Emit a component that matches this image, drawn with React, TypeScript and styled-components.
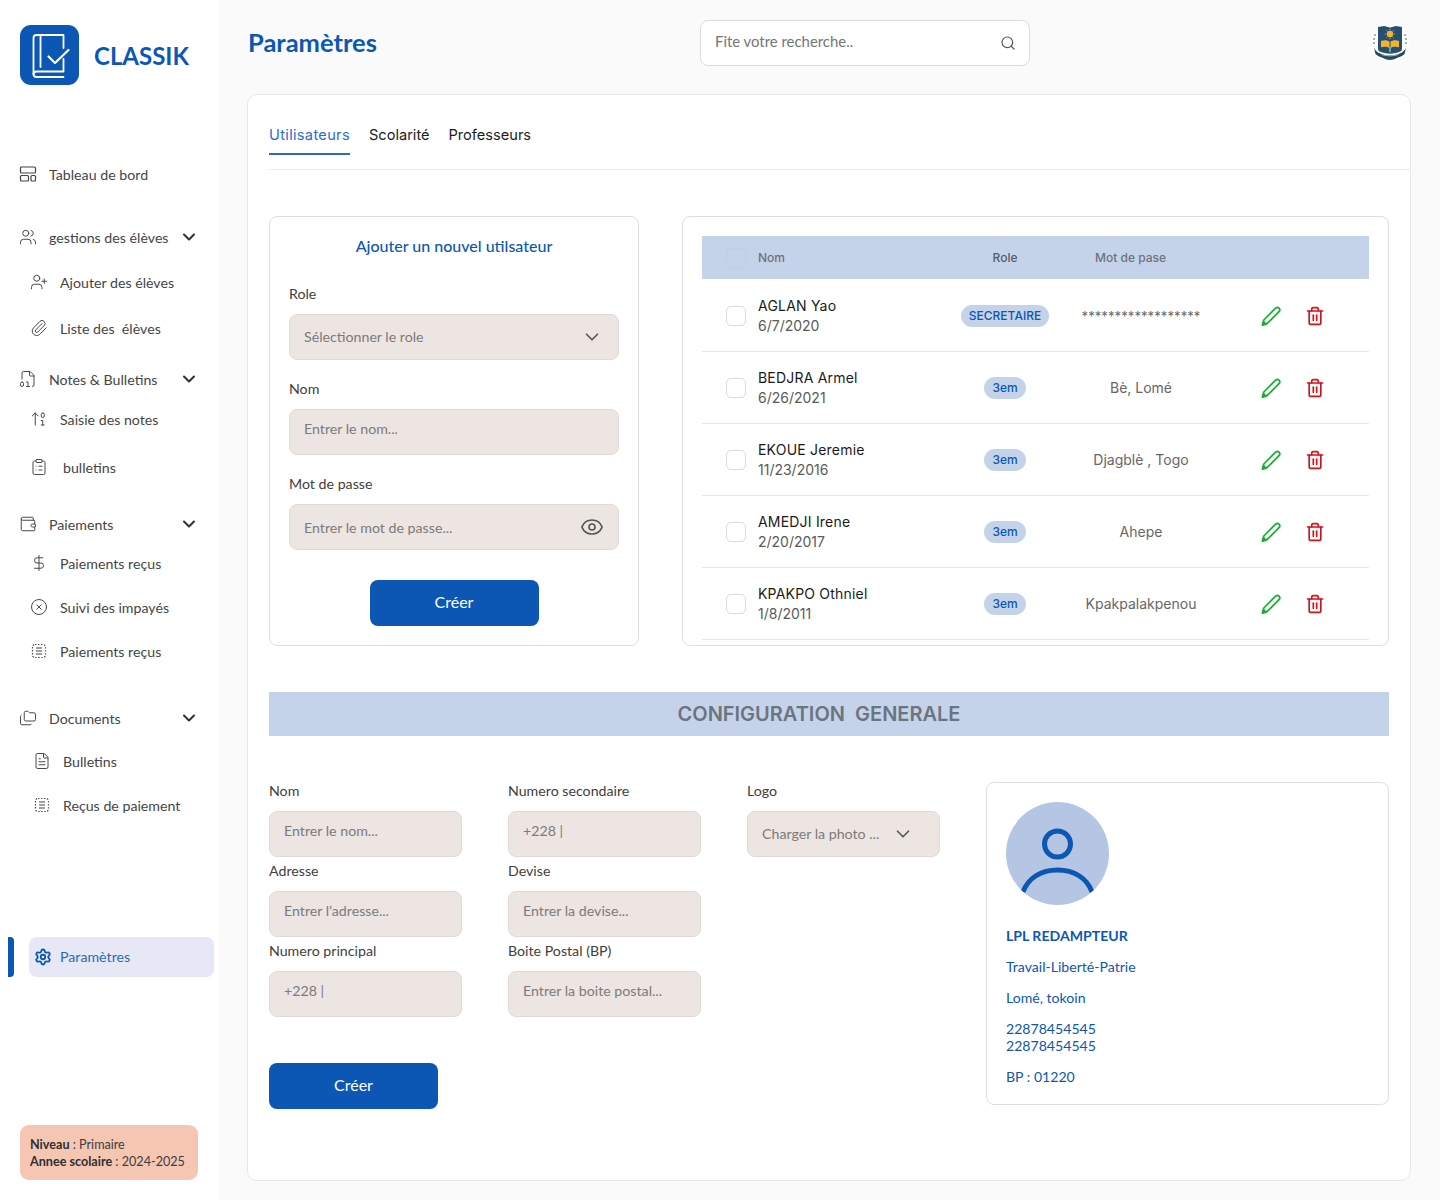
import React from 'react';
import styled, { createGlobalStyle } from 'styled-components';
import {
  Users, UserPlus, Paperclip, FileDigit, ArrowUp01, ClipboardList, Wallet, DollarSign,
  CircleX, Folders, FileText, Settings, ChevronDown, Search, Eye, Trash2,
} from 'lucide-react';

const Global = createGlobalStyle`
  html, body { margin: 0; padding: 0; background: #fafafa; }
  * { box-sizing: border-box; }
  body { font-family: "Lato", "Liberation Sans", sans-serif; color: #333; }
`;

const Page = styled.div`
  display: flex;
  width: 1440px;
  height: 1200px;
  overflow: hidden;
`;
const Sidebar = styled.aside`
  width: 218px;
  height: 1200px;
  background: #fff;
  display: flex;
  flex-direction: column;
  flex: none;
`;
const Brand = styled.div`
  display: flex;
  gap: 15px;
  padding: 25px 0 0 20px;
  height: 162px;
  align-items: flex-start;
`;
const BrandMark = styled.div`
  width: 59px;
  height: 60px;
  border-radius: 11px;
  background: #0b57b3;
  display: flex;
  align-items: center;
  justify-content: center;
`;
const BrandName = styled.div`
  font-size: 24px;
  font-weight: 700;
  color: #0b57b3;
  line-height: 62px;
`;
const NavRow = styled.div<{ $top: number; $sub?: boolean; $wide?: boolean; $textGap?: number }>`
  display: flex;
  align-items: center;
  height: 24px;
  margin-top: ${p => p.$top}px;
  padding-left: ${p => (p.$wide ? 33 : p.$sub ? 30 : 19)}px;
  padding-right: 19px;
  font-size: 14.2px;
  color: #454545;
  gap: ${p => p.$textGap ?? 12}px;
  white-space: pre;
  svg { flex: none; color: #444; }
`;
const NavIcon = styled.span`
  width: 18px;
  height: 18px;
  display: flex;
  align-items: center;
  justify-content: center;
  flex: none;
`;
const NavLabel = styled.span`
  flex: 1;
  margin-right: -6px;
`;
const ActiveRow = styled.div`
  display: flex;
  align-items: center;
  margin-top: 120px;
  height: 40px;
  gap: 15px;
  padding-left: 8px;
`;
const ActiveMark = styled.div`
  width: 6px;
  height: 40px;
  background: #0b57b3;
  border-radius: 0 4px 4px 0;
`;
const ActivePill = styled.div`
  width: 185px;
  height: 40px;
  background: #e6e8f5;
  border-radius: 8px;
  display: flex;
  align-items: center;
  gap: 8px;
  padding: 0 0 0 5px;
  font-size: 14.2px;
  color: #2f68b5;
  svg { color: #0b57b3; }
`;
const PillText = styled.span`
  padding-bottom: 2px;
`;
const LevelBox = styled.div`
  margin: 148px 0 0 20px;
  width: 178px;
  height: 55px;
  background: #f5c6b2;
  border-radius: 9px;
  padding: 12px 10px;
  font-size: 12.6px;
  line-height: 16.5px;
  color: #3d3d3d;
  white-space: nowrap;
  b { font-weight: 700; color: #2f2f2f; }
`;
const Main = styled.main`
  flex: 1;
  padding: 0 29px;
`;
const TopBar = styled.header`
  height: 94px;
  display: flex;
  align-items: flex-start;
`;
const Title = styled.h1`
  margin: 25px 0 0 1px;
  width: 452px;
  font-size: 25.5px;
  line-height: 34px;
  font-weight: 700;
  color: #0b57b3;
`;
const SearchBox = styled.div`
  margin-top: 20px;
  width: 330px;
  height: 46px;
  background: #fff;
  border: 1px solid #dcdcdc;
  border-radius: 8px;
  display: flex;
  align-items: center;
  justify-content: space-between;
  padding: 0 13px 0 14px;
  font-size: 14.9px;
  color: #757575;
  svg { color: #555; }
`;
const SearchText = styled.span`
  padding-bottom: 4px;
`;
const Emblem = styled.div`
  margin: 23px 0 0 340px;
  width: 40px;
  height: 40px;
`;
const Card = styled.section`
  width: 1164px;
  height: 1087px;
  background: #fff;
  border: 1px solid #e8e8e8;
  border-radius: 10px;
  padding: 0 0 0 21px;
`;
const Tabs = styled.nav`
  display: flex;
  gap: 19px;
  height: 75px;
  border-bottom: 1px solid #ececec;
  padding-top: 22px;
`;
const Tab = styled.div<{ $active?: boolean }>`
  height: 38px;
  line-height: 36px;
  font-family: "Inter", "Liberation Sans", sans-serif;
  font-size: 14.6px;
  letter-spacing: ${p => (p.$active ? '0.32px' : '0')};
  color: ${p => (p.$active ? '#2b6bd1' : '#1c1c1c')};
  border-bottom: 2px solid ${p => (p.$active ? '#2b6bd1' : 'transparent')};
`;
const Upper = styled.div`
  display: flex;
  gap: 43px;
  margin-top: 46px;
`;
const FormPanel = styled.div`
  width: 370px;
  height: 430px;
  border: 1px solid #dedede;
  border-radius: 8px;
  padding: 0 19px;
`;
const FormTitle = styled.h2`
  margin: 19px 0 0;
  font-size: 16px;
  font-weight: 500;
  line-height: 20px;
  color: #0b57b3;
  text-align: center;
`;
const Label = styled.div<{ $top?: number }>`
  margin-top: ${p => p.$top ?? 0}px;
  font-size: 14.2px;
  line-height: 20px;
  color: #404040;
`;
const Field = styled.div<{ $top?: number; $right?: number }>`
  margin-top: ${p => p.$top ?? 0}px;
  height: 46px;
  background: #ede5e2;
  border: 1px solid #dfdad7;
  border-radius: 8px;
  display: flex;
  align-items: center;
  justify-content: space-between;
  padding: 0 ${p => p.$right ?? 15}px 0 14px;
  font-size: 14.2px;
  color: #7b7b7b;
  white-space: nowrap;
  svg { color: #555; flex: none; }
`;
const FieldText = styled.span<{ $lift?: number }>`
  padding-bottom: ${p => (p.$lift ?? 0) * 2}px;
`;
const Primary = styled.div<{ $top: number; $center?: boolean }>`
  width: 169px;
  height: 46px;
  margin: ${p => p.$top}px ${p => (p.$center ? 'auto' : '0')} 0;
  padding-bottom: 3px;
  background: #0b57b3;
  border-radius: 8px;
  color: #fff;
  font-size: 16px;
  display: flex;
  align-items: center;
  justify-content: center;
`;
const TablePanel = styled.div`
  width: 707px;
  height: 430px;
  border: 1px solid #dedede;
  border-radius: 8px;
  padding: 19px 19px 0;
  font-family: "Inter", "Liberation Sans", sans-serif;
`;
const rowGrid = `
  display: grid;
  grid-template-columns: 32px 197px 100px 172px 1fr;
  padding-left: 24px;
  align-items: center;
`;
const HeadRow = styled.div`
  ${rowGrid}
  height: 43px;
  margin-bottom: 1px;
  background: #c5d3ea;
  font-size: 12px;
  font-weight: 500;
  color: #6b7280;
`;
const HeadRole = styled.div`
  text-align: center;
  color: #555c68;
`;
const HeadPass = styled.div`
  padding-left: 40px;
`;
const Check = styled.div<{ $head?: boolean }>`
  width: 20px;
  height: 20px;
  border: 1px solid ${p => (p.$head ? '#c0cde2' : '#d9d9d9')};
  border-radius: 5px;
`;
const BodyRow = styled.div`
  ${rowGrid}
  height: 72px;
  border-bottom: 1px solid #e6e6e6;
  padding-top: 1px;
`;
const Person = styled.div`
  font-size: 14px;
  line-height: 20px;
  color: #5a5a5a;
  strong { display: block; font-weight: 400; color: #1a1a1a; letter-spacing: 0.2px; }
`;
const RoleCell = styled.div`
  display: flex;
  justify-content: center;
`;
const Badge = styled.span`
  height: 22px;
  line-height: 22px;
  padding: 0 8px;
  border-radius: 11px;
  background: #c5d3ea;
  color: #0b57b3;
  font-size: 12px;
  font-weight: 500;
  white-space: nowrap;
`;
const PassCell = styled.div<{ $stars?: boolean }>`
  text-align: center;
  font-size: ${p => (p.$stars ? 13.2 : 14)}px;
  color: #666;
  transform: translateY(${p => (p.$stars ? 0 : -1)}px);
`;
const Actions = styled.div`
  display: flex;
  padding-left: 22px;
`;
const ActionBtn = styled.span<{ $color: string }>`
  width: 44px;
  height: 22px;
  display: flex;
  align-items: center;
  justify-content: center;
  color: ${p => p.$color};
`;
const SectionBar = styled.div`
  margin-top: 46px;
  width: 1120px;
  height: 44px;
  background: #c5d3ea;
  display: flex;
  align-items: center;
  justify-content: center;
  padding-right: 20px;
  font-family: "Inter", "Liberation Sans", sans-serif;
  font-size: 20px;
  font-weight: 600;
  color: #6c7480;
  white-space: pre;
`;
const Config = styled.div`
  display: flex;
  gap: 46px;
  margin-top: 46px;
  width: 1120px;
`;
const ConfigLeft = styled.div`
  width: 671px;
`;
const ConfigGrid = styled.div`
  display: grid;
  grid-template-columns: repeat(3, 193px);
  column-gap: 46px;
  row-gap: 5px;
`;
const ConfigField = styled.div`
  height: 75px;
`;
const ConfigLabel = styled.div`
  font-size: 14.2px;
  line-height: 18px;
  height: 29px;
  color: #404040;
`;
const EyeIcon = styled(Eye)`
  margin-right: -1px;
`;
const SchoolCard = styled.div`
  width: 403px;
  height: 323px;
  border: 1px solid #dedede;
  border-radius: 8px;
  padding: 19px 19px 0;
  color: #0b57b3;
  font-size: 14.1px;
`;
const Avatar = styled.div`
  width: 103px;
  height: 103px;
  border-radius: 50%;
  background: #b4c6e3;
  overflow: hidden;
`;
const SchoolName = styled.div`
  margin-top: 21px;
  font-weight: 700;
  line-height: 20px;
`;
const SchoolLine = styled.div<{ $top: number }>`
  margin-top: ${p => p.$top}px;
  line-height: 17px;
`;

const BoardIcon = () => (
  <svg width="18" height="18" viewBox="0 0 18 18" fill="none" stroke="#444" strokeWidth="1.2">
    <rect x="1.5" y="2" width="15" height="6" rx="1" />
    <rect x="1.5" y="10.5" width="8" height="5.5" rx="1" />
    <rect x="12" y="10.5" width="4.5" height="5.5" rx="1" />
  </svg>
);
const DashedList = () => (
  <svg width="18" height="18" viewBox="0 0 18 18" fill="none" stroke="#444" strokeWidth="1.2">
    <rect x="2.5" y="2.5" width="13" height="13" rx="2.5" strokeDasharray="1.4 1.6" />
    <path d="M6 6h6M6 9h6M6 12h6" />
  </svg>
);
const BookLogo = () => (
  <svg width="44" height="46" viewBox="0 0 44 46" fill="none" stroke="#fff" strokeWidth="1.8" strokeLinecap="round" strokeLinejoin="round">
    <path d="M5.5 42V6a3 3 0 0 1 3-3h27v13" />
    <path d="M12.5 4v31" />
    <path d="M5.5 42a3 3 0 0 1 3-2.5h27V27" />
    <path d="M5.5 42a3 3 0 0 0 3 3h27" />
    <path d="M20.5 24.5l6.5 6.5L40.5 18" strokeWidth="2.2" />
  </svg>
);
const PencilIcon = () => (
  <svg width="22" height="22" viewBox="0 0 22 22" fill="none" stroke="currentColor" strokeWidth="1.7" strokeLinejoin="round">
    <path d="M2.5 20l1.3-5L15.6 3.2a2.4 2.4 0 0 1 3.4 3.4L7.3 18.4z" />
    <path d="M2.5 20l.9-3.4 2.5 2.5z" fill="currentColor" />
  </svg>
);
const SchoolEmblem = () => (
  <svg width="40" height="40" viewBox="0 0 40 40">
    <circle cx="20" cy="20" r="19.5" fill="#fff" />
    <path d="M8 4l6-1 6 1.5L26 3l6 1v21c0 8-6 12-12 12S8 33 8 25z" fill="#26506f" />
    <circle cx="20" cy="11" r="3.2" fill="#f2b234" />
    <path d="M20 5.8v1.4M20 14.8v1.4M14.8 11h1.4M23.8 11h1.4M16.3 7.3l1 1M22.7 13.7l1 1M23.7 7.3l-1 1M17.3 13.7l-1 1" stroke="#f2b234" strokeWidth=".8" />
    <path d="M11 18c3-1.400 6.500-1 8.500 .6V25c-2-1.400-5.500-1.800-8.500-.8z" fill="#f2b234" />
    <path d="M29 18c-3-1.400-6.500-1-8.500 .6V25c2-1.400 5.500-1.800 8.500-.8z" fill="#f2b234" />
    <path d="M20 24v5" stroke="#8fc0d3" strokeWidth="1.4" />
    <path d="M4 25c4 6 10 7.500 16 7.500S32 31 36 25l-1.500 6c-4 3.500-9 4.500-14.500 4.500S9.500 34.500 5.500 31z" fill="#1f4a68" />
    <path d="M5 25.500c4 5 10 6 15 6s11-1 15-6" stroke="#fff" strokeWidth="1.5" fill="none" />
    <path d="M11.500 31.500c5 1.800 12 1.800 17 0" stroke="#e9b23f" strokeWidth="1" fill="none" />
    <g fill="#6e8ea5">
      <circle cx="5" cy="12" r=".9" /><circle cx="4" cy="16" r=".9" /><circle cx="4" cy="20" r=".9" />
      <circle cx="35" cy="12" r=".9" /><circle cx="36" cy="16" r=".9" /><circle cx="36" cy="20" r=".9" />
    </g>
  </svg>
);

const ic = { size: 18, strokeWidth: 1.3 };
const NavChevron = () => <ChevronDown size={20} strokeWidth={2.5} color="#333" />;

const rows = [
  { name: 'AGLAN Yao', date: '6/7/2020', role: 'SECRETAIRE', pass: '******************', stars: true },
  { name: 'BEDJRA Armel', date: '6/26/2021', role: '3em', pass: 'Bè, Lomé' },
  { name: 'EKOUE Jeremie', date: '11/23/2016', role: '3em', pass: 'Djagblè , Togo' },
  { name: 'AMEDJI Irene', date: '2/20/2017', role: '3em', pass: 'Ahepe' },
  { name: 'KPAKPO Othniel', date: '1/8/2011', role: '3em', pass: 'Kpakpalakpenou' },
];

const configFields: { label: string; value: string; chevron?: boolean }[] = [
  { label: 'Nom', value: 'Entrer le nom...' },
  { label: 'Numero secondaire', value: '+228 |' },
  { label: 'Logo', value: 'Charger la photo ...', chevron: true },
  { label: 'Adresse', value: 'Entrer l’adresse...' },
  { label: 'Devise', value: 'Entrer la devise...' },
  { label: '', value: '' },
  { label: 'Numero principal', value: '+228 |' },
  { label: 'Boite Postal (BP)', value: 'Entrer la boite postal...' },
];

export default function App() {
  return (
    <Page>
      <Global />
      <Sidebar>
        <Brand>
          <BrandMark><BookLogo /></BrandMark>
          <BrandName>CLASSIK</BrandName>
        </Brand>
        <NavRow $top={0}><NavIcon><BoardIcon /></NavIcon><NavLabel>Tableau de bord</NavLabel></NavRow>
        <NavRow $top={39}><NavIcon><Users {...ic} /></NavIcon><NavLabel>gestions des élèves</NavLabel><NavChevron /></NavRow>
        <NavRow $top={21} $sub><NavIcon><UserPlus {...ic} /></NavIcon><NavLabel>Ajouter des élèves</NavLabel></NavRow>
        <NavRow $top={22} $sub><NavIcon><Paperclip {...ic} /></NavIcon><NavLabel>Liste des  élèves</NavLabel></NavRow>
        <NavRow $top={27}><NavIcon><FileDigit {...ic} /></NavIcon><NavLabel>Notes &amp; Bulletins</NavLabel><NavChevron /></NavRow>
        <NavRow $top={16} $sub><NavIcon><ArrowUp01 {...ic} /></NavIcon><NavLabel>Saisie des notes</NavLabel></NavRow>
        <NavRow $top={24} $sub $textGap={15}><NavIcon><ClipboardList {...ic} /></NavIcon><NavLabel>bulletins</NavLabel></NavRow>
        <NavRow $top={33}><NavIcon><Wallet {...ic} /></NavIcon><NavLabel>Paiements</NavLabel><NavChevron /></NavRow>
        <NavRow $top={15} $sub><NavIcon><DollarSign {...ic} /></NavIcon><NavLabel>Paiements reçus</NavLabel></NavRow>
        <NavRow $top={20} $sub><NavIcon><CircleX {...ic} /></NavIcon><NavLabel>Suivi des impayés</NavLabel></NavRow>
        <NavRow $top={20} $sub><NavIcon><DashedList /></NavIcon><NavLabel>Paiements reçus</NavLabel></NavRow>
        <NavRow $top={43}><NavIcon><Folders {...ic} /></NavIcon><NavLabel>Documents</NavLabel><NavChevron /></NavRow>
        <NavRow $top={19} $wide><NavIcon><FileText {...ic} /></NavIcon><NavLabel>Bulletins</NavLabel></NavRow>
        <NavRow $top={20} $wide><NavIcon><DashedList /></NavIcon><NavLabel>Reçus de paiement</NavLabel></NavRow>
        <ActiveRow>
          <ActiveMark />
          <ActivePill><Settings size={18} strokeWidth={2.4} /><PillText>Paramètres</PillText></ActivePill>
        </ActiveRow>
        <LevelBox><b>Niveau</b> : Primaire<br /><b>Annee scolaire</b> : 2024-2025</LevelBox>
      </Sidebar>
      <Main>
        <TopBar>
          <Title>Paramètres</Title>
          <SearchBox><SearchText>Fite votre recherche..</SearchText><Search size={16} strokeWidth={1.8} /></SearchBox>
          <Emblem><SchoolEmblem /></Emblem>
        </TopBar>
        <Card>
          <Tabs>
            <Tab $active>Utilisateurs</Tab>
            <Tab>Scolarité</Tab>
            <Tab>Professeurs</Tab>
          </Tabs>
          <Upper>
            <FormPanel>
              <FormTitle>Ajouter un nouvel utilsateur</FormTitle>
              <Label $top={28}>Role</Label>
              <Field $top={10}><FieldText $lift={1}>Sélectionner le role</FieldText><ChevronDown size={22} strokeWidth={1.8} /></Field>
              <Label $top={19}>Nom</Label>
              <Field $top={10}><FieldText $lift={4}>Entrer le nom...</FieldText></Field>
              <Label $top={19}>Mot de passe</Label>
              <Field $top={10}><FieldText>Entrer le mot de passe...</FieldText><EyeIcon size={24} strokeWidth={1.6} /></Field>
              <Primary $top={30} $center>Créer</Primary>
            </FormPanel>
            <TablePanel>
              <HeadRow>
                <Check $head />
                <div>Nom</div>
                <HeadRole>Role</HeadRole>
                <HeadPass>Mot de pase</HeadPass>
              </HeadRow>
              {rows.map(r => (
                <BodyRow key={r.name}>
                  <Check />
                  <Person><strong>{r.name}</strong>{r.date}</Person>
                  <RoleCell><Badge>{r.role}</Badge></RoleCell>
                  <PassCell $stars={r.stars}>{r.pass}</PassCell>
                  <Actions>
                    <ActionBtn $color="#12b02c"><PencilIcon /></ActionBtn>
                    <ActionBtn $color="#d3131b"><Trash2 size={20} strokeWidth={2} /></ActionBtn>
                  </Actions>
                </BodyRow>
              ))}
            </TablePanel>
          </Upper>
          <SectionBar>CONFIGURATION  GENERALE</SectionBar>
          <Config>
            <ConfigLeft>
              <ConfigGrid>
                {configFields.map((f, i) => (
                  <ConfigField key={i}>
                    {f.label && <ConfigLabel>{f.label}</ConfigLabel>}
                    {f.value && (
                      <Field $right={f.chevron ? 25 : 15}>
                        <FieldText $lift={f.chevron ? 1 : 4}>{f.value}</FieldText>
                        {f.chevron && <ChevronDown size={22} strokeWidth={1.8} />}
                      </Field>
                    )}
                  </ConfigField>
                ))}
              </ConfigGrid>
              <Primary $top={46}>Créer</Primary>
            </ConfigLeft>
            <SchoolCard>
              <Avatar>
                <svg width="103" height="103" viewBox="0 0 103 103" fill="none" stroke="#0b57b3" strokeWidth="5">
                  <circle cx="51.5" cy="42" r="13" />
                  <path d="M17 90c5-14 18-22 34.500-22S81 76 86 90" />
                </svg>
              </Avatar>
              <SchoolName>LPL REDAMPTEUR</SchoolName>
              <SchoolLine $top={12}>Travail-Liberté-Patrie</SchoolLine>
              <SchoolLine $top={14}>Lomé, tokoin</SchoolLine>
              <SchoolLine $top={14}>22878454545<br />22878454545</SchoolLine>
              <SchoolLine $top={14}>BP : 01220</SchoolLine>
            </SchoolCard>
          </Config>
        </Card>
      </Main>
    </Page>
  );
}
